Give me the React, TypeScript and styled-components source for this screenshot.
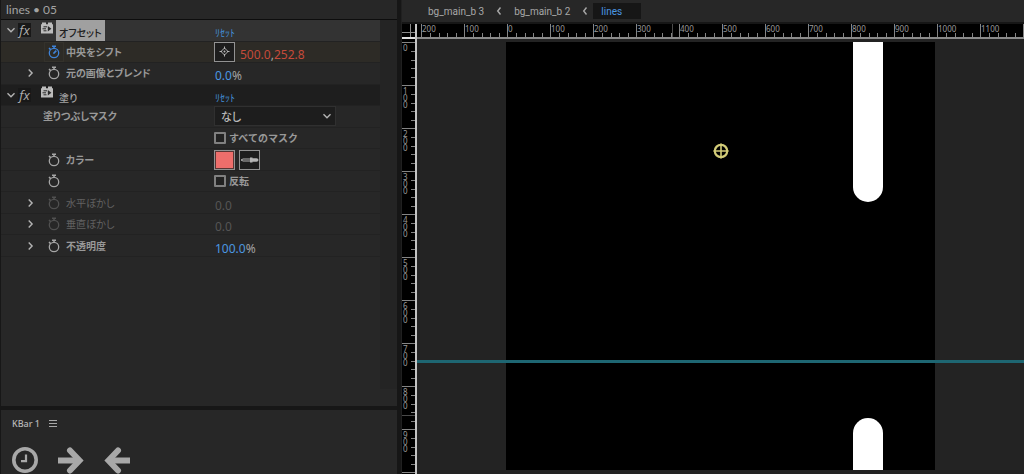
import React, { useState } from "react";
import styled, { createGlobalStyle, css } from "styled-components";

const GlobalStyle = createGlobalStyle`
  * { box-sizing: border-box; }
  body {
    margin: 0;
    background: #262626;
    color: #a3a3a3;
    font-family: "Noto Sans CJK JP", "Noto Sans", sans-serif;
    font-size: 10px;
    line-height: 14px;
  }
  button, select, input { font: inherit; color: inherit; }
`;

const Workspace = styled.main`
  display: grid;
  grid-template-columns: minmax(0, 397fr) 5px minmax(0, 622fr);
  height: 100vh;
  overflow: hidden;
  background: #171717;
`;

const Dock = styled.div`
  display: flex;
  flex-direction: column;
  gap: 4px;
  min-height: 0;
  padding-left: 1px;
`;

const EffectsPanel = styled.section`
  flex: 1;
  min-height: 0;
  display: flex;
  flex-direction: column;
  background: #272727;
`;

const PanelTitle = styled.h1`
  margin: 0;
  height: 20px;
  padding: 3px 5px 0;
  border-bottom: 1px solid #0d0d0d;
  font-family: Lato, sans-serif;
  font-size: 12px;
  font-weight: 400;
  line-height: 14px;
`;

const EffectsBody = styled.div`
  flex: 1;
  display: grid;
  grid-template-columns: minmax(0, 1fr) 17px;
  margin-bottom: 17px;
`;

const Gutter = styled.div`
  background: #242424;
`;

const Rows = styled.div`
  display: grid;
  grid-auto-rows: minmax(0, 1fr);
  align-self: start;
  height: 237px;
`;

type Tone = "selected" | "active" | "header" | "plain";

const tones: Record<Tone, string> = {
  selected: "#333333",
  active: "#2d2b26",
  header: "#1e1e1e",
  plain: "#272727",
};

const Row = styled.div<{ $tone: Tone }>`
  display: grid;
  grid-template-columns: 213px minmax(0, 1fr);
  min-height: 0;
  background: ${(p) => tones[p.$tone]};
  border-bottom: 1px solid #222222;
`;

const NameCell = styled.div<{ $top?: boolean }>`
  display: flex;
  align-items: center;
  padding-left: ${(p) => (p.$top ? 3 : 22)}px;
`;

const ValueCell = styled.div`
  display: flex;
  align-items: center;
  gap: 4px;
`;

const bareButton = css`
  display: flex;
  align-items: center;
  justify-content: center;
  padding: 0;
  border: 0;
  background: none;
`;

const Twirl = styled.button`
  ${bareButton}
  width: 14px;
  height: 14px;
  color: #b4b4b4;
`;

const FxToggle = styled.button`
  ${bareButton}
  width: 13px;
  height: 14px;
  background: #181818;
  color: #b0b0b0;
  font-family: "Open Sans", sans-serif;
  font-style: italic;
  font-weight: 500;
  font-size: 13px;
  line-height: 14px;
`;

const PresetIcon = styled.svg`
  margin: 0 3px 5px 10px;
`;

const EffectName = styled.span<{ $selected?: boolean }>`
  align-self: stretch;
  padding: 6px 3px 0;
  font-size: 10px;
  line-height: 14px;
  font-weight: 500;
  font-feature-settings: "palt";
  ${(p) => p.$selected && css`
    background: #a0a0a0;
    color: #202020;
  `}
`;

const Watch = styled.button<{ $on?: boolean; $dim?: boolean }>`
  ${bareButton}
  width: 20px;
  height: 20px;
  margin: 0 2px 0 7px;
  color: ${(p) => (p.$on ? "#3f83d8" : p.$dim ? "#505050" : "#a6a6a6")};
  ${(p) => p.$on && css`
    border: 1px solid #34322c;
  `}
`;

const PropName = styled.span<{ $dim?: boolean; $flat?: boolean }>`
  padding-left: ${(p) => (p.$flat ? 6 : 0)}px;
  font-weight: ${(p) => (p.$dim ? 400 : 700)};
  font-feature-settings: "palt";
  color: ${(p) => (p.$dim ? "#626262" : "#999999")};
`;

const Reset = styled.a`
  padding: 6px 1px 0;
  align-self: flex-start;
  color: #4490da;
  text-decoration: none;
  line-height: 14px;
`;

const Value = styled.span<{ $kind?: "dim" | "red" }>`
  padding: 6px 1px 0;
  font-family: "Noto Sans", sans-serif;
  font-size: 12px;
  line-height: 14px;
  color: #a3a3a3;

  b {
    font-weight: 400;
    color: ${(p) =>
      p.$kind === "dim" ? "#555555" : p.$kind === "red" ? "#c64a3a" : "#4b97e2"};
  }
`;

const SquareButton = styled.button<{ $fill?: string }>`
  ${bareButton}
  flex: none;
  width: 21px;
  height: 20px;
  border: 1px solid #929292;
  color: #b4b4b4;
  background: ${(p) => p.$fill ?? "#1d1d1d"};
  ${(p) => p.$fill && css`
    box-shadow: inset 0 0 0 1px #5a3533;
  `}
`;

const SelectWrap = styled.div`
  display: grid;
  align-items: center;
  width: 122px;
  color: #b4b4b4;

  > * { grid-area: 1 / 1; }
  > svg { justify-self: end; margin-right: 4px; pointer-events: none; }
`;

const MaskSelect = styled.select`
  appearance: none;
  width: 100%;
  height: 20px;
  padding: 0 18px 0 6px;
  border: 1px solid #303030;
  border-radius: 0;
  background: #1d1d1d;
  color: #b8b8b8;
  font-size: 11px;
  font-weight: 500;
  font-feature-settings: "palt";
`;

const CheckLabel = styled.label`
  display: flex;
  align-items: center;
  gap: 3px;
  font-weight: 700;
  color: #999999;
`;

const Check = styled.input`
  appearance: none;
  width: 12px;
  height: 12px;
  margin: 0;
  border: 2px solid #808080;
  border-radius: 1px;
  background: #222222;
  &:checked { background: #808080; }
`;

const ToolPanel = styled.section`
  height: 64px;
  padding: 7px 11px 0;
  background: #272727;
`;

const ToolHeader = styled.header`
  display: flex;
  align-items: center;
  gap: 9px;
  height: 14px;
`;

const ToolTitle = styled.h2`
  margin: 0;
  font-family: "Noto Sans", sans-serif;
  font-size: 9px;
  font-weight: 500;
  line-height: 14px;
  color: #b8b8b8;
`;

const IconButton = styled.button`
  ${bareButton}
  color: #a8a8a8;
`;

const ToolRow = styled.div`
  display: flex;
  gap: 20px;
  padding-top: 15px;
`;

const Divider = styled.div`
  background: #161616;
  border-right: 1px solid #202020;
`;

const Viewer = styled.section`
  display: grid;
  grid-template-columns: 13px 2px minmax(0, 1fr);
  grid-template-rows: 22px 2px 13px 2px minmax(0, 1fr);
  min-height: 0;
  background: #000000;
`;

const Crumbs = styled.nav`
  grid-column: 1 / -1;
  display: flex;
  align-items: center;
  padding-left: 26px;
  background: #272727;
  font-family: Roboto, sans-serif;
`;

const Crumb = styled.a<{ $current?: boolean }>`
  height: 16px;
  padding-top: 1px;
  line-height: 16px;
  color: #a8a8a8;
  text-decoration: none;
  ${(p) => p.$current && css`
    min-width: 48px;
    padding-left: 8px;
    margin-left: -7px;
    background: #161616;
    color: #4b97e2;
  `}
`;

const CrumbArrow = styled.svg`
  margin: 0 12px;
`;

const CrumbEdge = styled.div`
  grid-column: 1 / -1;
  background: #161616;
`;

const Corner = styled.svg`
  display: block;
`;

const RulerLineV = styled.div`
  grid-column: 2;
  grid-row: 3 / -1;
  background: #c4c4c4;
`;

const RulerLineH = styled.div<{ $bright?: boolean }>`
  grid-row: 4;
  background: ${(p) => (p.$bright ? "#e0e0e0" : "#8a8a8a")};
`;

const TopRuler = styled.div`
  position: relative;
  grid-column: 3;
  grid-row: 3;
  display: flex;
  padding-left: 4px;
  overflow-x: clip;
`;

const SideRuler = styled.div`
  position: relative;
  grid-column: 1;
  grid-row: 5;
  padding-top: 3px;
  overflow: hidden;
`;

const TopSegment = styled.div`
  flex: none;
  display: grid;
  grid-template-columns: repeat(5, 1fr);
  align-items: end;
  width: 43px;
  border-left: 1px solid #858585;
`;

const TopLabel = styled.span`
  grid-area: 1 / 1 / 2 / 6;
  align-self: start;
  font-family: "Noto Sans", sans-serif;
  font-size: 8px;
  line-height: 9px;
  color: #9a9a9a;
`;

const TopTick = styled.i<{ $n: number }>`
  grid-row: 1;
  grid-column: ${(p) => p.$n};
  width: 1px;
  height: 4px;
  background: #858585;
`;

const SideSegment = styled.div`
  display: grid;
  grid-template-rows: repeat(5, 1fr);
  grid-template-columns: 1fr 4px;
  height: 43px;
  border-top: 1px solid #858585;
`;

const SideLabel = styled.span`
  grid-area: 1 / 1 / 6 / 2;
  width: 7px;
  padding-left: 1px;
  padding-top: 1px;
  font-family: "Noto Sans", sans-serif;
  font-size: 8px;
  line-height: 7px;
  word-break: break-all;
  color: #9a9a9a;
`;

const SideTick = styled.i<{ $n: number }>`
  grid-column: 2;
  grid-row: ${(p) => p.$n};
  height: 1px;
  background: #858585;
`;

const PointerMark = styled.div<{ $axis: "x" | "y" }>`
  position: absolute;
  background: #4a4a4a;
  ${(p) =>
    p.$axis === "x"
      ? css`top: 0; bottom: 0; left: 255px; width: 1px;`
      : css`left: 0; right: 0; top: 376px; height: 1px;`}
`;

const Viewport = styled.div`
  position: relative;
  grid-column: 3;
  grid-row: 5;
  display: flex;
  justify-content: center;
  align-items: flex-start;
  padding-top: 3px;
  overflow: hidden;
  background: #232323;
`;

const Composition = styled.div`
  position: relative;
  flex: none;
  width: 429px;
  height: 428px;
  background: #000000;
  overflow: hidden;
`;

const Bar = styled.div<{ $y: number; $h: number; $end: "top" | "bottom" }>`
  position: absolute;
  left: 347px;
  top: ${(p) => p.$y}px;
  width: 30px;
  height: ${(p) => p.$h}px;
  background: #ffffff;
  border-radius: ${(p) => (p.$end === "top" ? "15px 15px 0 0" : "0 0 15px 15px")};
`;

const AnchorMark = styled.svg`
  position: absolute;
  left: 207px;
  top: 101px;
`;

const Guide = styled.div`
  position: absolute;
  left: 0;
  right: 0;
  top: 321px;
  height: 3px;
  background: #1e6672;
`;

const Chevron = ({ dir }: { dir: "down" | "right" }) => (
  <svg width="10" height="10" viewBox="0 0 10 10" fill="none" stroke="currentColor" strokeWidth="1.4">
    <path d={dir === "down" ? "M1.5 3.3L5 6.7L8.5 3.3" : "M3.7 1.5L7.1 5L3.7 8.5"} />
  </svg>
);

const Stopwatch = ({ hand }: { hand?: boolean }) => (
  <svg width="12" height="14" viewBox="0 0 12 14" fill="none" stroke="currentColor" strokeWidth="1.3">
    <circle cx="6" cy="8" r="4.7" />
    <path d="M4 1.2H8M6 1.2V3.2M1 3L2.6 4.6" strokeWidth="1.5" />
    {hand && <path d="M5.4 8.6L8.3 5.6" strokeWidth="1.6" />}
  </svg>
);

const Preset = () => (
  <PresetIcon width="12" height="12" viewBox="0 0 12 12">
    <path fill="#bcbcbc" d="M1 2.2V0.5H5V2.2H7V0.5H11V2.2H12V11.5H0V2.2Z" />
    <path d="M2.5 4.8H6M1.5 6.8H5M2.5 8.8H5.5" stroke="#2a2a2a" strokeWidth="1" />
    <path d="M6.8 4L10.4 6.8L6.8 9.6Z" fill="#2a2a2a" />
  </PresetIcon>
);

const EffectHeader = ({ name, selected }: { name: string; selected?: boolean }) => (
  <Row $tone={selected ? "selected" : "header"}>
    <NameCell $top>
      <Twirl aria-label={name}><Chevron dir="down" /></Twirl>
      <FxToggle>fx</FxToggle>
      <Preset />
      <EffectName $selected={selected}>{name}</EffectName>
    </NameCell>
    <ValueCell><Reset href="#reset">ﾘｾｯﾄ</Reset></ValueCell>
  </Row>
);

type PropProps = {
  name?: string;
  twirl?: boolean;
  watch?: "on" | "off" | "dim";
  active?: boolean;
  children: React.ReactNode;
};

const TwirlSpace = styled.span`
  width: 14px;
`;

const Prop = ({ name, twirl, watch, active, children }: PropProps) => (
  <Row $tone={active ? "active" : "plain"}>
    <NameCell>
      {twirl ? (
        <Twirl aria-label={name}><Chevron dir="right" /></Twirl>
      ) : (
        <TwirlSpace />
      )}
      {watch && (
        <Watch $on={watch === "on"} $dim={watch === "dim"} aria-label="stopwatch">
          <Stopwatch hand={watch === "on"} />
        </Watch>
      )}
      {name && <PropName $dim={watch === "dim"} $flat={!watch}>{name}</PropName>}
    </NameCell>
    <ValueCell>{children}</ValueCell>
  </Row>
);

const BackArrow = () => (
  <CrumbArrow width="6" height="10" viewBox="0 0 6 10" fill="none" stroke="#a8a8a8" strokeWidth="1.4">
    <path d="M4.5 1.5L1.7 5L4.5 8.5" />
  </CrumbArrow>
);

const ticks = [2, 3, 4, 5];
const topLabels = [200, 100, 0, 100, 200, 300, 400, 500, 600, 700, 800, 900, 1000, 1100];
const sideLabels = [0, 100, 200, 300, 400, 500, 600, 700, 800, 900];

export default function App() {
  const [allMasks, setAllMasks] = useState(false);
  const [invert, setInvert] = useState(false);

  return (
    <>
      <GlobalStyle />
      <Workspace>
        <Dock>
          <EffectsPanel>
            <PanelTitle>lines • 05</PanelTitle>
            <EffectsBody>
              <Rows>
                <EffectHeader name="オフセット" selected />
                <Prop name="中央をシフト" watch="on" active>
                  <SquareButton aria-label="point">
                    <svg width="11" height="11" viewBox="0 0 11 11" fill="none" stroke="currentColor">
                      <path d="M5.5 2L9 5.5L5.5 9L2 5.5Z" />
                      <path d="M5.5 0.5V3M5.5 8V10.5M0.5 5.5H3M8 5.5H10.5" />
                      <circle cx="5.5" cy="5.5" r="1" fill="currentColor" stroke="none" />
                    </svg>
                  </SquareButton>
                  <Value $kind="red"><b>500.0</b>,<b>252.8</b></Value>
                </Prop>
                <Prop name="元の画像とブレンド" twirl watch="off">
                  <Value><b>0.0</b>%</Value>
                </Prop>
                <EffectHeader name="塗り" />
                <Prop name="塗りつぶしマスク">
                  <SelectWrap>
                    <MaskSelect aria-label="塗りつぶしマスク">
                      <option>なし</option>
                    </MaskSelect>
                    <Chevron dir="down" />
                  </SelectWrap>
                </Prop>
                <Prop>
                  <CheckLabel>
                    <Check type="checkbox" checked={allMasks} onChange={() => setAllMasks(!allMasks)} />
                    すべてのマスク
                  </CheckLabel>
                </Prop>
                <Prop name="カラー" watch="off">
                  <SquareButton $fill="#ee6e6b" aria-label="カラー" />
                  <SquareButton aria-label="eyedropper">
                    <svg width="19" height="8" viewBox="0 0 19 8">
                      <path d="M1 4L3 3H11V5H3Z" fill="none" stroke="currentColor" />
                      <path d="M10 1.5H12.5V2.2H16.5Q18.5 2.4 18.5 4Q18.5 5.6 16.5 5.8H12.5V6.5H10Z" fill="currentColor" />
                    </svg>
                  </SquareButton>
                </Prop>
                <Prop watch="off">
                  <CheckLabel>
                    <Check type="checkbox" checked={invert} onChange={() => setInvert(!invert)} />
                    反転
                  </CheckLabel>
                </Prop>
                <Prop name="水平ぼかし" twirl watch="dim">
                  <Value $kind="dim"><b>0.0</b></Value>
                </Prop>
                <Prop name="垂直ぼかし" twirl watch="dim">
                  <Value $kind="dim"><b>0.0</b></Value>
                </Prop>
                <Prop name="不透明度" twirl watch="off">
                  <Value><b>100.0</b>%</Value>
                </Prop>
              </Rows>
              <Gutter />
            </EffectsBody>
          </EffectsPanel>

          <ToolPanel>
            <ToolHeader>
              <ToolTitle>KBar 1</ToolTitle>
              <IconButton aria-label="menu">
                <svg width="8" height="8" viewBox="0 0 8 8" stroke="currentColor">
                  <path d="M0 0.5H8M0 3.5H8M0 6.5H8" />
                </svg>
              </IconButton>
            </ToolHeader>
            <ToolRow>
              <IconButton aria-label="clock">
                <svg width="26" height="26" viewBox="0 0 26 26" fill="none" stroke="currentColor">
                  <circle cx="13" cy="13" r="11.2" strokeWidth="3.6" />
                  <path d="M14 7.5V14.2H9" strokeWidth="2.2" />
                </svg>
              </IconButton>
              <IconButton aria-label="right">
                <svg width="26" height="28" viewBox="0 0 26 28" fill="none" stroke="currentColor" strokeWidth="6">
                  <path d="M0 14.5H20" />
                  <path d="M12 4.5L21.5 14.5L12 24.5" strokeLinecap="round" />
                </svg>
              </IconButton>
              <IconButton aria-label="left">
                <svg width="26" height="28" viewBox="0 0 26 28" fill="none" stroke="currentColor" strokeWidth="6">
                  <path d="M26 14.5H6" />
                  <path d="M14 4.5L4.5 14.5L14 24.5" strokeLinecap="round" />
                </svg>
              </IconButton>
            </ToolRow>
          </ToolPanel>
        </Dock>

        <Divider />

        <Viewer>
          <Crumbs>
            <Crumb href="#3">bg_main_b 3</Crumb>
            <BackArrow />
            <Crumb href="#2">bg_main_b 2</Crumb>
            <BackArrow />
            <Crumb href="#lines" $current>lines</Crumb>
          </Crumbs>
          <CrumbEdge />
          <Corner width="13" height="13" viewBox="0 0 13 13" stroke="#8a8a8a">
            <path d="M8.5 0V13M0 8.5H13" />
          </Corner>
          <RulerLineV />
          <TopRuler>
            {topLabels.map((label, i) => (
              <TopSegment key={i}>
                <TopLabel>{label}</TopLabel>
                {ticks.map((n) => <TopTick key={n} $n={n} />)}
              </TopSegment>
            ))}
            <TopSegment />
            <PointerMark $axis="x" />
          </TopRuler>
          <RulerLineH $bright />
          <RulerLineH />
          <SideRuler>
            {sideLabels.map((label) => (
              <SideSegment key={label}>
                <SideLabel>{label}</SideLabel>
                {ticks.map((n) => <SideTick key={n} $n={n} />)}
              </SideSegment>
            ))}
            <SideSegment />
            <PointerMark $axis="y" />
          </SideRuler>
          <Viewport>
            <Composition>
              <Bar $y={0} $h={160} $end="bottom" />
              <Bar $y={376} $h={52} $end="top" />
              <AnchorMark width="16" height="16" viewBox="0 0 16 16" fill="none" stroke="#d3cc78">
                <circle cx="8" cy="8" r="6.2" strokeWidth="2.2" />
                <path d="M8 0.5V15.5M0.5 8H15.5" strokeWidth="1.6" />
              </AnchorMark>
            </Composition>
            <Guide />
          </Viewport>
        </Viewer>
      </Workspace>
    </>
  );
}
